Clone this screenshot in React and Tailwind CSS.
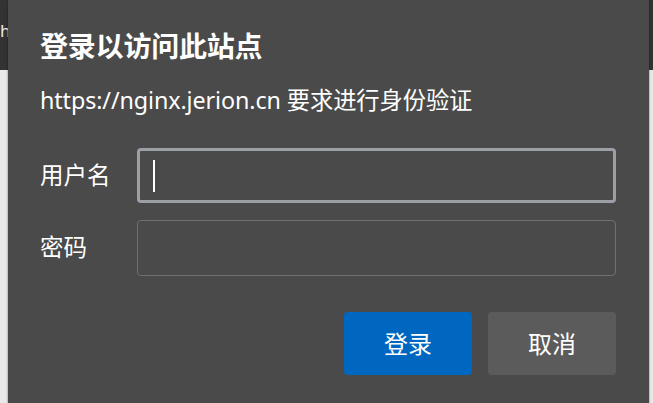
export default function App() {
  const font = { fontFamily: '"Noto Sans", "Noto Sans CJK SC", sans-serif' };
  return (
    <div className="relative w-[653px] h-[403px] overflow-hidden bg-[#e9e9e9]" style={font}>
      <div className="h-[70px] bg-[#333333] flex items-center pl-[0px]">
        <span className="text-[17px] text-[#e8e8e8] leading-none -mt-[10px]">h</span>
      </div>
      <div className="absolute left-[8px] top-0 w-[641px] h-[420px] bg-[#4a4a4a] shadow-[0_0_2px_rgba(0,0,0,0.5)] pt-[28px] pl-[32px] pr-[33px] text-white">
        <div className="h-[36px] leading-[36px] text-[28px] font-bold tracking-[-0.2px]">登录以访问此站点</div>
        <div className="mt-[20px] h-[32px] leading-[32px] text-[23.3px] tracking-[-0.1px]">https://nginx.jerion.cn 要求进行身份验证</div>
        <div className="mt-[32px] flex items-center h-[55px]">
          <div className="w-[97px] text-[23.5px] leading-none">用户名</div>
          <div className="flex-1 h-[55px] rounded-[4px] border-[3px] border-[#9ca0a6] bg-[#4a4a4a] flex items-center pl-[13px]">
            <div className="w-[2px] h-[32px] bg-white"></div>
          </div>
        </div>
        <div className="mt-[17px] flex items-center h-[56px]">
          <div className="w-[97px] text-[23.5px] leading-none">密码</div>
          <div className="flex-1 h-[56px] rounded-[4px] border border-[#6f6f6f] bg-[#4a4a4a]"></div>
        </div>
        <div className="mt-[36px] flex justify-end gap-[16px]">
          <button className="w-[128px] h-[63px] rounded-[4px] bg-[#0067c0] text-white text-[24px]">登录</button>
          <button className="w-[128px] h-[63px] rounded-[4px] bg-[#5b5b5b] text-white text-[24px]">取消</button>
        </div>
      </div>
    </div>
  );
}
